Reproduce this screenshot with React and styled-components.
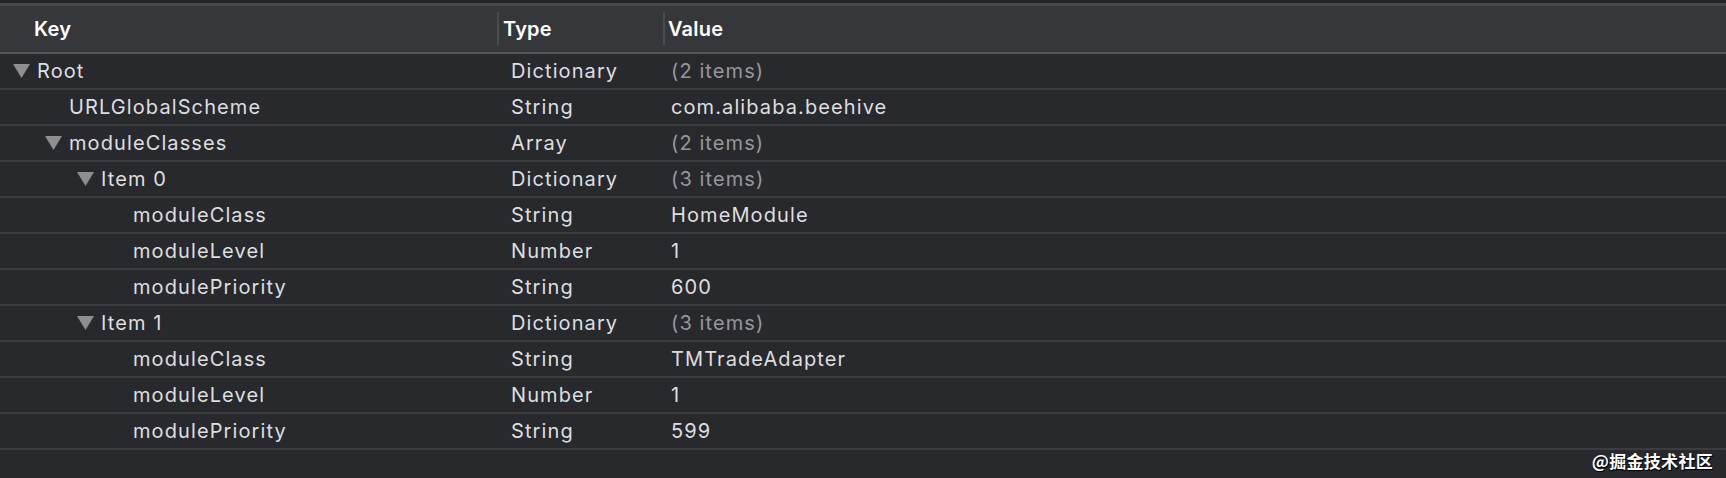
import React from "react";
import styled, { createGlobalStyle } from "styled-components";

const GlobalStyle = createGlobalStyle`
  html, body { margin: 0; padding: 0; background: #28292d; }
  body { font-family: Inter, "Noto Sans", sans-serif; -webkit-font-smoothing: antialiased; }
`;

const KEY_W = 497;
const TYPE_W = 166;

const Frame = styled.div`
  position: relative;
  width: 1726px;
  height: 478px;
  background: #28292d;
  overflow: hidden;
`;

const TopStrip = styled.div`
  height: 3px;
  background: #222327;
  border-bottom: 3px solid #48494c;
`;

const Grid = styled.div`
  display: grid;
  grid-template-columns: ${KEY_W}px ${TYPE_W}px 1fr;
`;

const HeaderRow = styled(Grid)`
  height: 46px;
  background: #36373b;
  border-bottom: 2px solid #56575a;
`;

const HeaderCell = styled.div`
  position: relative;
  display: flex;
  align-items: center;
  padding-left: ${(p) => p.$pad}px;
  font-size: 20px;
  font-weight: 600;
  letter-spacing: 0.2px;
  color: #ffffff;
  ${(p) =>
    p.$divider &&
    `
    &::before {
      content: "";
      position: absolute;
      left: 0;
      top: 6px;
      bottom: 7px;
      width: 2px;
      background: #4b4c50;
    }
  `}
`;

const Row = styled(Grid)`
  height: 34px;
  border-bottom: 2px solid #3b3c40;
  font-size: 20px;
  letter-spacing: 1.1px;
  color: #dedee0;
`;

const KeyCell = styled.div`
  display: flex;
  align-items: center;
  padding-left: ${(p) => 13 + p.$level * 32}px;
  gap: 7px;
  white-space: nowrap;
`;

const Disclosure = styled.span`
  display: inline-flex;
  width: 17px;
  height: 14px;
  flex: none;
  margin-top: -1px;
`;

const TypeCell = styled.div`
  display: flex;
  align-items: center;
  padding-left: 14px;
`;

const ValueCell = styled.div`
  display: flex;
  align-items: center;
  padding-left: 8px;
  color: ${(p) => (p.$muted ? "#97979b" : "#dedee0")};
`;

const Watermark = styled.div`
  position: absolute;
  right: 13px;
  top: 448px;
  font-family: "Noto Sans CJK SC", "Noto Sans", sans-serif;
  font-size: 17px;
  font-weight: 700;
  color: #ffffff;
  text-shadow: 1px 1px 0 #000, 0 1px 1px #000;
  letter-spacing: 0.3px;
`;

const Triangle = () => (
  <svg width="17" height="14" viewBox="0 0 17 14">
    <polygon points="0,0 17,0 8.5,14" fill="#8e8e92" />
  </svg>
);

const rows = [
  { level: 0, key: "Root", open: true, type: "Dictionary", value: "(2 items)", muted: true },
  { level: 1, key: "URLGlobalScheme", type: "String", value: "com.alibaba.beehive" },
  { level: 1, key: "moduleClasses", open: true, type: "Array", value: "(2 items)", muted: true },
  { level: 2, key: "Item 0", open: true, type: "Dictionary", value: "(3 items)", muted: true },
  { level: 3, key: "moduleClass", type: "String", value: "HomeModule" },
  { level: 3, key: "moduleLevel", type: "Number", value: "1" },
  { level: 3, key: "modulePriority", type: "String", value: "600" },
  { level: 2, key: "Item 1", open: true, type: "Dictionary", value: "(3 items)", muted: true },
  { level: 3, key: "moduleClass", type: "String", value: "TMTradeAdapter" },
  { level: 3, key: "moduleLevel", type: "Number", value: "1" },
  { level: 3, key: "modulePriority", type: "String", value: "599" },
];

export default function App() {
  return (
    <Frame>
      <GlobalStyle />
      <TopStrip />
      <HeaderRow>
        <HeaderCell $pad={34}>Key</HeaderCell>
        <HeaderCell $pad={6} $divider>Type</HeaderCell>
        <HeaderCell $pad={5} $divider>Value</HeaderCell>
      </HeaderRow>
      {rows.map((r, i) => (
        <Row key={i}>
          <KeyCell $level={r.level}>
            <Disclosure>{r.open ? <Triangle /> : null}</Disclosure>
            <span>{r.key}</span>
          </KeyCell>
          <TypeCell>{r.type}</TypeCell>
          <ValueCell $muted={r.muted}>{r.value}</ValueCell>
        </Row>
      ))}
      <Watermark>@掘金技术社区</Watermark>
    </Frame>
  );
}
